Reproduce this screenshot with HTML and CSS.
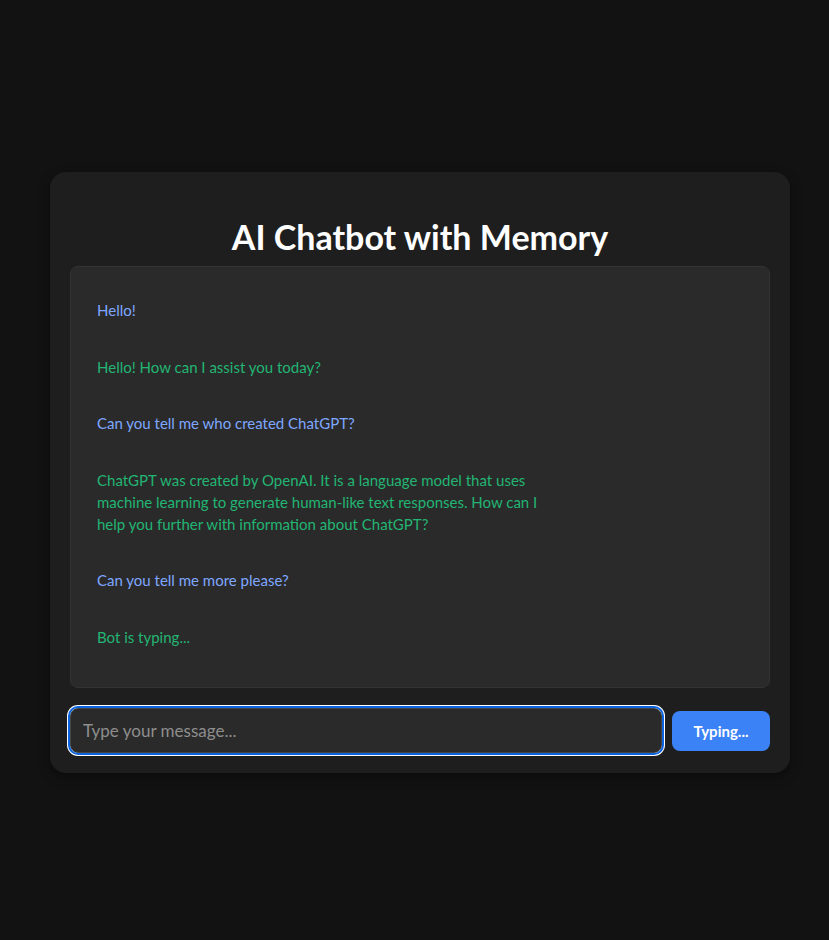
FILE: index.html
```html
<!DOCTYPE html>
<html lang="en">
<head>
<meta charset="utf-8">
<title>AI Chatbot with Memory</title>
<link rel="stylesheet" href="styles.css">
</head>
<body>
<div class="page">
  <div class="container">
    <h1 class="title">AI Chatbot with Memory</h1>
    <div class="chat">
      <div class="msg user">Hello!</div>
      <div class="msg bot">Hello! How can I assist you today?</div>
      <div class="msg user">Can you tell me who created ChatGPT?</div>
      <div class="msg bot">ChatGPT was created by OpenAI. It is a language model that uses machine learning to generate human-like text responses. How can I help you further with information about ChatGPT?</div>
      <div class="msg user">Can you tell me more please?</div>
      <div class="msg bot">Bot is typing...</div>
    </div>
    <div class="input-row">
      <input class="input" type="text" placeholder="Type your message...">
      <button class="send">Typing...</button>
    </div>
  </div>
</div>
</body>
</html>
```
FILE: styles.css
```css
html, body {
  margin: 0;
  padding: 0;
  background: #121212;
  height: 100%;
}
body {
  font-family: Lato, "Noto Sans", sans-serif;
  color: #fff;
}
.page {
  display: flex;
  justify-content: center;
  padding-top: 172px;
  padding-left: 11px;
}
.container {
  width: 740px;
  box-sizing: border-box;
  background: #1e1e1e;
  border-radius: 16px;
  padding: 46px 20px 20px;
  box-shadow: 0 4px 12px rgba(0, 0, 0, 0.4);
}
.title {
  margin: 0 0 10px;
  text-align: center;
  font-size: 34px;
  line-height: 38px;
  font-weight: 700;
  color: #fff;
}
.chat {
  height: 422px;
  box-sizing: border-box;
  background: #2a2a2a;
  border: 1px solid #333;
  border-radius: 8px;
  padding: 20px 14px 10px;
  display: flex;
  flex-direction: column;
  gap: 10.6px;
}
.msg {
  max-width: 70%;
  box-sizing: border-box;
  padding: 12px;
  font-size: 15px;
  line-height: 22px;
}
.msg.user { color: #7fa7ff; }
.msg.bot { color: #22b573; }
.input-row {
  display: flex;
  gap: 10px;
  align-items: center;
  margin-top: 20px;
}
.input {
  flex: 1;
  height: 45px;
  box-sizing: border-box;
  background: #2a2a2a;
  border: 1px solid #444;
  border-radius: 8px;
  padding: 0 12px;
  font-family: Lato, sans-serif;
  font-size: 17px;
  color: #fff;
  outline: 2px solid #0b63e0;
  box-shadow: 0 0 0 3px #fff;
}
.input::placeholder { color: #8e8e8e; }
.send {
  width: 98px;
  height: 40px;
  border: none;
  border-radius: 8px;
  background: #3b82f6;
  color: #fff;
  font-family: Lato, sans-serif;
  font-weight: 700;
  font-size: 15px;
}
```
